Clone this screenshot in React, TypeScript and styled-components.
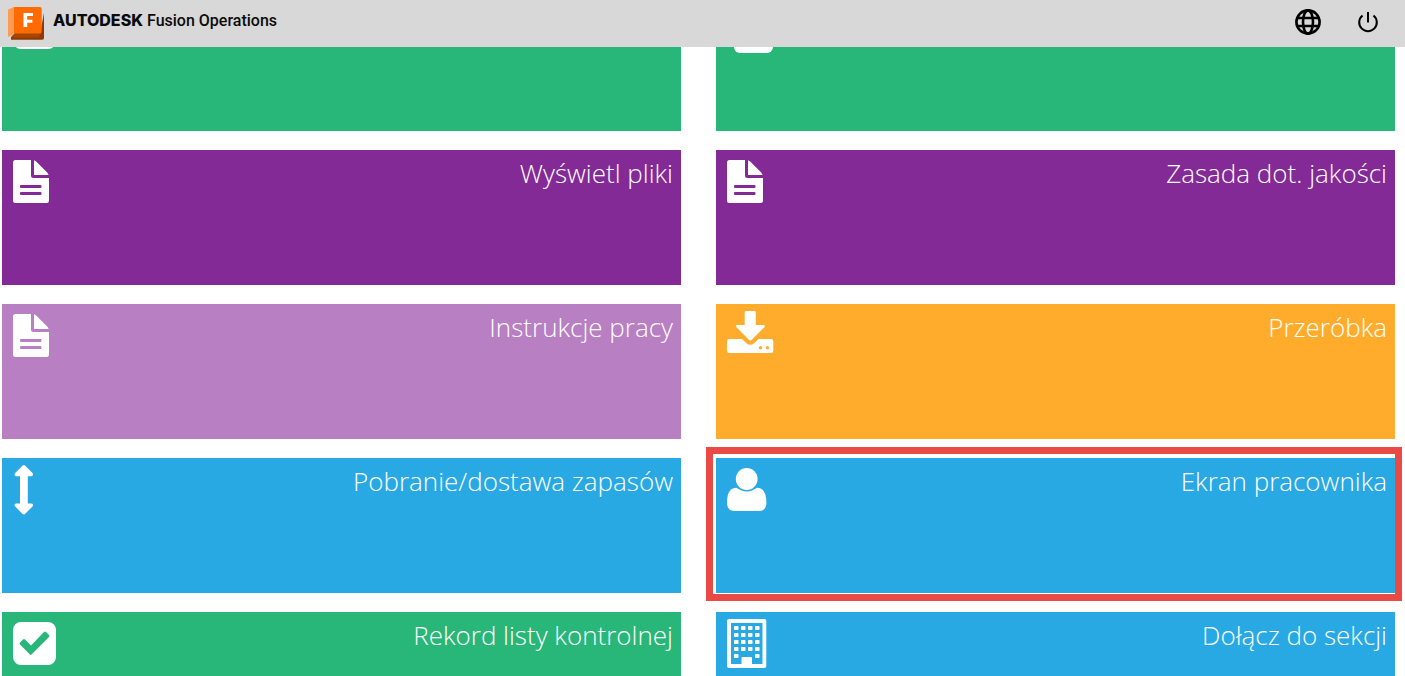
import React from 'react';
import styled, { createGlobalStyle, css } from 'styled-components';

const GlobalStyle = createGlobalStyle`
  * { box-sizing: border-box; }
  body { margin: 0; background: #ffffff; }
`;

const Shell = styled.div`
  height: 100vh;
  overflow: hidden;
  font-family: 'Open Sans', sans-serif;
`;

const Header = styled.header`
  position: sticky;
  top: 0;
  z-index: 1;
  display: flex;
  align-items: center;
  justify-content: space-between;
  height: 47px;
  padding: 0 23px 0 8px;
  background: #d8d8d8;
`;

const Brand = styled.a`
  display: flex;
  align-items: center;
  gap: 8px;
  color: #0b0b0b;
  text-decoration: none;
`;

const Wordmark = styled.span`
  display: flex;
  align-items: baseline;
  gap: 4px;
  padding-bottom: 6px;
  line-height: 20px;
`;

const Company = styled.strong`
  font-family: Inter, sans-serif;
  font-size: 16px;
  font-weight: 800;
`;

const Product = styled.span`
  font-family: Roboto, sans-serif;
  font-size: 16px;
  font-weight: 500;
`;

const Actions = styled.nav`
  display: flex;
  gap: 32px;
  padding-bottom: 4px;
`;

const IconButton = styled.button`
  display: flex;
  padding: 0;
  border: 0;
  background: none;
  color: #000000;
  cursor: pointer;
`;

const Board = styled.main`
  display: grid;
  grid-template-columns: 1fr 1fr;
  grid-auto-rows: 135px;
  gap: 19px 35px;
  margin-top: -51px;
  padding: 0 10px 0 2px;
`;

const highlightFrame = css`
  &::after {
    content: '';
    position: absolute;
    inset: -11px -7px -8px -10px;
    border: 7px solid #ea4a45;
    pointer-events: none;
  }
`;

const Tile = styled.button<{ $color: string; $highlighted?: boolean }>`
  position: relative;
  display: flex;
  align-items: flex-start;
  justify-content: space-between;
  padding: 7px 8px 0 11px;
  border: 0;
  background: ${({ $color }) => $color};
  color: #ffffff;
  font-family: inherit;
  cursor: pointer;
  ${({ $highlighted }) => $highlighted && highlightFrame}
`;

const TileTitle = styled.span`
  font-size: 26px;
  font-weight: 300;
  line-height: 32px;
`;

const Glyph = styled.svg`
  display: block;
  flex: none;
  fill: #ffffff;
`;

type IconName = 'check' | 'calendar' | 'file' | 'download' | 'arrows' | 'user' | 'building';

const windows = [7, 14, 21, 28].flatMap((y) => [7, 14, 21, 28].map((x) => ({ x, y })));

const drawings: Record<IconName, React.ReactNode> = {
  check: (
    <path
      fillRule="evenodd"
      d="M8 3h27a8 8 0 0 1 8 8v27a8 8 0 0 1-8 8H8a8 8 0 0 1-8-8V11a8 8 0 0 1 8-8zM18.500 35.500l17.500-17.500q1-1 0-2l-3-3q-1-1-2 0L18 26.500l-6-6q-1-1-2 0l-3 3q-1 1 0 2l10 10q.8.800 1.500 0z"
    />
  ),
  calendar: <rect x="7" y="7" width="39" height="43" rx="6" />,
  file: (
    <path
      fillRule="evenodd"
      d="M2.500 3H18v15.500a2.500 2.500 0 0 0 2.500 2.500H36v22.500a2.500 2.500 0 0 1-2.500 2.500h-31A2.500 2.500 0 0 1 0 43.500v-38A2.500 2.500 0 0 1 2.500 3zM21 3.200q1.200.4 2.200 1.300l11 11q1 1 1.400 2.500H21zM8 28a1 1 0 0 0-1 1v1a1 1 0 0 0 1 1h19.500a1 1 0 0 0 1-1v-1a1 1 0 0 0-1-1zM8 35a1 1 0 0 0-1 1v1a1 1 0 0 0 1 1h19.500a1 1 0 0 0 1-1v-1a1 1 0 0 0-1-1z"
    />
  ),
  download: (
    <path
      fillRule="evenodd"
      d="M19 0h8.500q1.300 0 1.300 1.300V14h7.700q2.200.2.900 2.200L24.500 29q-1.200 1-2.400 0L9.500 16.200Q8.200 14.200 10.400 14h7.300V1.300Q17.700 0 19 0zM2 28h13l4.500 4.200q3.800 3 7.600 0L31.500 28H44q2.300 0 2.300 2.300v9.400q0 2.300-2.300 2.300H2.300Q0 42 0 39.700v-9.400Q0 28 2 28zM33.500 35a1.700 1.700 0 1 0 0 3.400 1.700 1.700 0 0 0 0-3.400zM40.500 35a1.700 1.700 0 1 0 0 3.400 1.700 1.700 0 0 0 0-3.400z"
    />
  ),
  arrows: (
    <path d="M12 .5 19.500 8q1 1.500.3 2.500-.5.700-1.800.7h-3.200v27.200H18q1.300 0 1.800.7.700 1-.3 2.300L12 49q-1.200.9-2.400 0L2.200 41.500q-1.100-1.400-.4-2.400.5-.7 1.800-.7H7V11.200H3.600q-1.300 0-1.800-.7-.7-1 .4-2.500L9.600.5q1.200-1 2.400 0z" />
  ),
  user: (
    <>
      <circle cx="19.700" cy="14" r="10.900" />
      <path d="M9.500 22.800q4.700 3.600 10.200 3.600t10.200-3.600q9.500 0 9.500 15 0 8.200-7.700 8.200H7.800Q0 46 0 37.800q0-15 9.500-15z" />
    </>
  ),
  building: (
    <>
      <path
        fillRule="evenodd"
        d="M2 0h35.500q1.800 0 1.800 1.800v45.400q0 1.800-1.800 1.800H2q-2 0-2-1.800V1.800Q0 0 2 0zM4 4v41h10.500v-6q0-1 1-1H24q1 0 1 1v6h10.500V4z"
      />
      {windows.map(({ x, y }) => (
        <rect key={`${x}-${y}`} x={x} y={y} width="4.500" height="4" rx=".8" />
      ))}
      <rect x="7" y="35" width="4.500" height="4" rx=".8" />
      <rect x="28" y="35" width="4.500" height="4" rx=".8" />
    </>
  ),
};

const TileIcon = ({ name }: { name: IconName }) => (
  <Glyph width="50" height="50" viewBox="0 0 50 50" aria-hidden="true">
    {drawings[name]}
  </Glyph>
);

const green = '#29b679';
const purple = '#842a97';
const lilac = '#b87fc3';
const orange = '#ffac2d';
const blue = '#28a9e4';

interface Item {
  id: string;
  icon: IconName;
  color: string;
  title?: string;
  highlighted?: boolean;
}

const items: Item[] = [
  { id: 'check', icon: 'check', color: green },
  { id: 'calendar', icon: 'calendar', color: green },
  { id: 'files', icon: 'file', color: purple, title: 'Wyświetl pliki' },
  { id: 'quality', icon: 'file', color: purple, title: 'Zasada dot. jakości' },
  { id: 'instructions', icon: 'file', color: lilac, title: 'Instrukcje pracy' },
  { id: 'rework', icon: 'download', color: orange, title: 'Przeróbka' },
  { id: 'stock', icon: 'arrows', color: blue, title: 'Pobranie/dostawa zapasów' },
  { id: 'worker', icon: 'user', color: blue, title: 'Ekran pracownika', highlighted: true },
  { id: 'checklist', icon: 'check', color: green, title: 'Rekord listy kontrolnej' },
  { id: 'section', icon: 'building', color: blue, title: 'Dołącz do sekcji' },
];

const Logo = () => (
  <svg width="37" height="33" viewBox="0 0 37 33" aria-hidden="true">
    <path d="M0 2.500 6 0v27L0 30z" fill="#ff9a55" />
    <path d="M3 32.700V30l4-3.500h25L36 6v25q0 1.700-1.700 1.700z" fill="#8f3a02" />
    <path d="M3 30.500 7 26h26l-2 4.500z" fill="#a84705" />
    <path d="M6 0h26q1.700 0 1.700 1.700V24.500q0 2-1.700 2H6z" fill="#ff6b00" />
    <path d="M15.500 6H25v3h-5.800v3.700h5.200v3h-5.200V20h-3.700z" fill="#ffffff" />
  </svg>
);

export default function App() {
  return (
    <Shell>
      <GlobalStyle />
      <Header>
        <Brand href="#">
          <Logo />
          <Wordmark>
            <Company>AUTODESK</Company>
            <Product>Fusion Operations</Product>
          </Wordmark>
        </Brand>
        <Actions>
          <IconButton type="button" aria-label="Język">
            <svg width="28" height="28" viewBox="0 0 28 28" fill="none" stroke="currentColor" strokeWidth="2.600">
              <circle cx="14" cy="14" r="11.600" />
              <ellipse cx="14" cy="14" rx="5" ry="11.600" />
              <path d="M3.200 10h21.600M3.200 18h21.600" />
            </svg>
          </IconButton>
          <IconButton type="button" aria-label="Wyloguj">
            <svg width="28" height="28" viewBox="0 0 28 28" fill="none" stroke="currentColor" strokeWidth="2">
              <path d="M14 4v10.500M8.500 7.500a8.800 8.800 0 1 0 11 0" />
            </svg>
          </IconButton>
        </Actions>
      </Header>
      <Board>
        {items.map(({ id, icon, color, title, highlighted }) => (
          <Tile key={id} type="button" $color={color} $highlighted={highlighted}>
            <TileIcon name={icon} />
            {title && <TileTitle>{title}</TileTitle>}
          </Tile>
        ))}
      </Board>
    </Shell>
  );
}
